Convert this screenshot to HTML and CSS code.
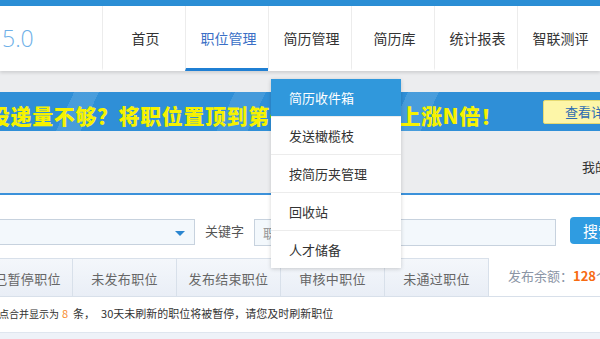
FILE: index.html
```html
<!DOCTYPE html>
<html lang="zh-CN">
<head>
    <meta charset="UTF-8">
    <meta name="viewport" content="width=device-width, initial-scale=1.0">
    <title>职位管理</title>
    <link rel="stylesheet" href="styles.css">
</head>
<body>

<div class="topbar"></div>

<!-- Header with logo and main navigation -->
<header class="header">
    <div class="logo">5.0</div>
    <nav class="nav">
        <a class="nav-item">首页</a>
        <a class="nav-item active">职位管理</a>
        <a class="nav-item">简历管理</a>
        <a class="nav-item">简历库</a>
        <a class="nav-item">统计报表</a>
        <a class="nav-item">智联测评</a>
    </nav>
</header>

<!-- Promo banner and account strip -->
<div class="grey-zone">
    <div class="promo">
        <span class="promo-text">投递量不够？将职位置顶到第一位，简历量上涨N倍！</span>
        <a class="promo-btn">查看详情</a>
    </div>
    <div class="welcome">我的账户</div>
</div>

<div class="content">
    <!-- Search row -->
    <div class="search-row">
        <div class="select-box"><span class="arrow"></span></div>
        <label class="search-label">关键字</label>
        <input class="search-input" type="text" placeholder="职位名称">
        <button class="search-btn">搜索</button>
    </div>

    <!-- Status tabs -->
    <div class="tabs-row">
        <div class="tab first">已暂停职位</div>
        <div class="tab">未发布职位</div>
        <div class="tab">发布结束职位</div>
        <div class="tab">审核中职位</div>
        <div class="tab">未通过职位</div>
        <div class="balance">发布余额：<b>128</b>个</div>
    </div>

    <p class="notice"><span class="lead">地点合并显示为</span><em>8</em>条，<span class="tip">30天未刷新的职位将被暂停，请您及时刷新职位</span></p>

    <div class="table-head"></div>
</div>

<!-- Dropdown of 简历管理 -->
<ul class="dropdown">
    <li class="selected">简历收件箱</li>
    <li>发送橄榄枝</li>
    <li>按简历夹管理</li>
    <li>回收站</li>
    <li>人才储备</li>
</ul>

</body>
</html>
```

FILE: styles.css
```css
/* General page */
body {
    margin: 0;
    width: 600px;
    height: 339px;
    overflow: hidden;
    background-color: #fff;
    font-family: "Noto Sans CJK SC", "Noto Sans", sans-serif;
    color: #333;
    position: relative;
}

.topbar {
    height: 6px;
    background-color: #2b8ed5;
}

/* Header */
.header {
    display: flex;
    height: 65px;
    background-color: #fff;
    box-shadow: 0 2px 3px rgba(0, 0, 0, 0.12);
    position: relative;
    z-index: 2;
}

.logo {
    width: 104px;
    padding-left: 2px;
    box-sizing: border-box;
    line-height: 65px;
    font-family: "Open Sans", sans-serif;
    font-weight: 300;
    font-size: 23px;
    color: #6eb0e8;
}

.nav {
    display: flex;
}

.nav-item {
    width: 83px;
    flex: none;
    border-left: 1px solid #ececec;
    text-align: center;
    line-height: 64px;
    font-size: 14px;
    color: #333;
    box-sizing: border-box;
    border-bottom: 3px solid transparent;
    height: 65px;
    padding-left: 3px;
}

.nav-item.active {
    color: #3a6fc6;
    border-bottom-color: #1f7fd3;
}

/* Grey area with banner */
.grey-zone {
    background-color: #ecedef;
    padding-top: 21px;
    border-bottom: 2px solid #3b91da;
}

.promo {
    display: flex;
    align-items: center;
    height: 39px;
    overflow: hidden;
    white-space: nowrap;
    background-color: #2f8fd7;
    background-image: linear-gradient(115deg,
        transparent 0 12%, rgba(255, 255, 255, 0.12) 12% 16%, transparent 16% 38%,
        rgba(255, 255, 255, 0.1) 38% 43%, transparent 43% 66%,
        rgba(255, 255, 255, 0.12) 66% 71%, transparent 71%);
}

.promo-text {
    flex: 0 0 554px;
    margin-left: -11px;
    padding-top: 6px;
    font-size: 21px;
    font-weight: 900;
    letter-spacing: 0.6px;
    color: #f6f200;
}

.promo-btn {
    flex: none;
    width: 100px;
    height: 22px;
    line-height: 22px;
    padding-left: 21px;
    background-color: #fdf6a8;
    border: 1px solid #e6da72;
    border-radius: 2px;
    font-size: 13px;
    color: #2c6bb2;
}

.welcome {
    height: 62px;
    line-height: 72px;
    padding-left: 582px;
    white-space: nowrap;
    font-size: 13px;
    color: #333;
}

/* Search row */
.search-row {
    display: flex;
    align-items: center;
    padding-top: 23px;
    height: 28px;
    white-space: nowrap;
}

.select-box {
    flex: none;
    width: 215px;
    height: 26px;
    margin-left: -20px;
    box-sizing: border-box;
    border: 1px solid #c7d2de;
    background-color: #f3f8fc;
    position: relative;
}

.arrow {
    position: absolute;
    right: 9px;
    top: 11px;
    border-left: 5px solid transparent;
    border-right: 5px solid transparent;
    border-top: 5px solid #2b86d0;
}

.search-label {
    margin-left: 10px;
    font-size: 13px;
    color: #555;
    margin-top: -3px;
}

.search-input {
    flex: none;
    width: 302px;
    height: 27px;
    margin-left: 10px;
    box-sizing: border-box;
    border: 1px solid #c7d2de;
    background-color: #f3f8fc;
    padding: 0 8px;
    font-family: inherit;
    font-size: 13px;
    outline: none;
}

.search-input::placeholder {
    color: #999;
}

.search-btn {
    flex: none;
    width: 60px;
    height: 27px;
    margin-left: 14px;
    margin-top: -3px;
    border: none;
    border-radius: 4px;
    background-color: #2f9ce1;
    color: #fff;
    font-family: inherit;
    font-size: 15px;
    text-align: left;
    padding-left: 13px;
}

/* Tabs */
.tabs-row {
    display: flex;
    align-items: flex-end;
    margin-top: 12px;
    height: 38px;
    border-bottom: 1px solid #d8e0ea;
    white-space: nowrap;
}

.tab {
    flex: none;
    width: 104px;
    height: 38px;
    box-sizing: border-box;
    border: 1px solid #d8e0ea;
    border-bottom: none;
    border-left: none;
    background: linear-gradient(#f4f7fb, #e9eef6);
    text-align: center;
    line-height: 40px;
    font-size: 13px;
    letter-spacing: 0.3px;
    color: #666;
}

.tab.first {
    margin-left: -31px;
    padding-left: 14px;
}

.balance {
    margin-left: 19px;
    line-height: 40px;
    font-size: 13px;
    color: #8b95a5;
}

.balance b {
    color: #f76b12;
}

/* Notice */
.notice {
    margin: 0;
    height: 35px;
    line-height: 33px;
    font-size: 11px;
    white-space: nowrap;
    color: #333;
}

.notice .lead {
    margin-left: -11px;
    font-size: 10px;
}

.notice em {
    font-style: normal;
    color: #f7892b;
    margin: 0 5px 0 3px;
}

.notice .tip {
    margin-left: 6px;
}

.table-head {
    height: 20px;
    border-top: 1px solid #dfe6ef;
    background-color: #eef2f8;
}

/* Dropdown menu over the page */
.dropdown {
    position: absolute;
    left: 271px;
    top: 79px;
    width: 130px;
    margin: 0;
    padding: 0;
    list-style: none;
    background-color: #fff;
    box-shadow: 0 1px 4px rgba(0, 0, 0, 0.18);
    z-index: 5;
}

.dropdown li {
    height: 38px;
    line-height: 37px;
    padding-left: 18px;
    box-sizing: border-box;
    border-bottom: 1px solid #ececec;
    font-size: 13px;
    color: #333;
}

.dropdown li:last-child {
    border-bottom: none;
    height: 37px;
}

.dropdown li.selected {
    background-color: #3098dc;
    color: #fff;
}
```
